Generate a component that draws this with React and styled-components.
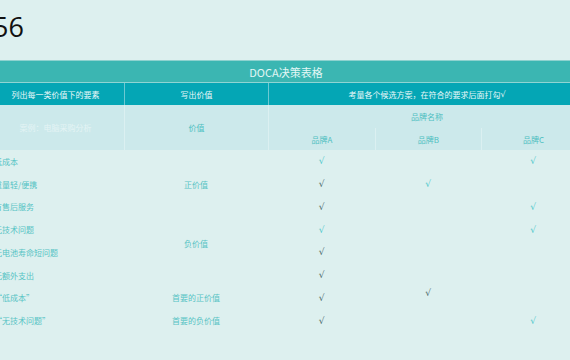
import React from 'react'
import styled, { createGlobalStyle } from 'styled-components'

const GlobalStyle = createGlobalStyle`
  html, body {
    margin: 0;
    padding: 0;
    background: #ddf0ef;
    overflow: hidden;
  }
  body {
    font-family: "Noto Sans CJK SC", "Noto Sans", sans-serif;
  }
`

const rows = [
  { item: '低成本', checks: ['teal', null, 'teal'] },
  { item: '重量轻/便携', checks: ['dark', 'teal', null] },
  { item: '有售后服务', checks: ['dark', null, 'teal'] },
  { item: '无技术问题', checks: ['teal', null, 'teal'] },
  { item: '无电池寿命短问题', checks: ['dark', null, null] },
  { item: '无额外支出', checks: ['dark', null, null] },
  { item: '“低成本”', checks: ['dark', null, null] },
  { item: '“无技术问题”', checks: ['dark', null, 'teal'] },
]

function App() {
  return (
    <Page>
      <GlobalStyle />
      <Heading>56</Heading>
      <Table>
        <TitleCell>DOCA决策表格</TitleCell>

        <HeadCell col="1" row="2">列出每一类价值下的要素</HeadCell>
        <HeadCell col="2" row="2" divided>写出价值</HeadCell>
        <HeadCell col="3 / 6" row="2" divided>
          考量各个候选方案，在符合的要求后面打勾<Tick>√</Tick>
        </HeadCell>

        <SubCell col="1" row="3 / 5" faint>案例：电脑采购分析</SubCell>
        <SubCell col="2" row="3 / 5" divided>价值</SubCell>
        <SubCell col="3 / 6" row="3" divided>品牌名称</SubCell>
        <SubCell col="3" row="4" divided>品牌A</SubCell>
        <SubCell col="4" row="4" divided>品牌B</SubCell>
        <SubCell col="5" row="4" divided>品牌C</SubCell>

        {rows.map((r, i) => (
          <ItemCell key={r.item} row={i + 5}>{r.item}</ItemCell>
        ))}

        <ValueCell row="5 / 8">正价值</ValueCell>
        <ValueCell row="8 / 11" lift={18}>负价值</ValueCell>
        <ValueCell row="11">首要的正价值</ValueCell>
        <ValueCell row="12">首要的负价值</ValueCell>

        {rows.map((r, i) =>
          r.checks.map((c, j) =>
            c ? (
              <CheckCell key={`${i}-${j}`} row={i + 5} col={j + 3} tone={c}>√</CheckCell>
            ) : null
          )
        )}
        <CheckCell row="11" col="4" tone="dark" lift={10}>√</CheckCell>
      </Table>
    </Page>
  )
}

export default App

const Page = styled.div`
  width: 570px;
  height: 360px;
  overflow: hidden;
`

const Heading = styled.div`
  height: 60px;
  box-sizing: border-box;
  padding-top: 12px;
  margin-left: -7px;
  font-family: "Open Sans", sans-serif;
  font-size: 27px;
  line-height: 30px;
  color: #111;
`

const Table = styled.div`
  display: grid;
  margin-left: -13px;
  width: 598px;
  grid-template-columns: 137px 144px 107px 106px 104px;
  grid-template-rows: 23px 22px 23px 22px repeat(8, 22.75px);
  font-size: 8px;
`

const TitleCell = styled.div`
  grid-column: 1 / -1;
  grid-row: 1;
  background: #3bb6b2;
  border-top: 1px solid #8ed2cf;
  border-bottom: 1px solid #8fd4d3;
  box-sizing: border-box;
  display: flex;
  align-items: center;
  justify-content: center;
  color: #e2f6f5;
  font-size: 11px;
`

const HeadCell = styled.div`
  grid-column: ${p => p.col};
  grid-row: ${p => p.row};
  background: #04a6b5;
  border-left: ${p => (p.divided ? '1px solid #6cc9d2' : 'none')};
  display: flex;
  align-items: center;
  justify-content: center;
  color: #eaf8f9;
`

const Tick = styled.span`
  font-family: "DejaVu Sans", sans-serif;
  font-size: 8px;
`

const SubCell = styled.div`
  grid-column: ${p => p.col};
  grid-row: ${p => p.row};
  background: #cce9eb;
  border-left: ${p => (p.divided ? '1px solid #dbf0f1' : 'none')};
  display: flex;
  align-items: center;
  justify-content: center;
  color: ${p => (p.faint ? '#e4f4f5' : '#4fbfc1')};
`

const ItemCell = styled.div`
  grid-column: 1;
  grid-row: ${p => p.row};
  display: flex;
  align-items: center;
  padding-left: 7px;
  color: #56c3c4;
`

const ValueCell = styled.div`
  grid-column: 2;
  grid-row: ${p => p.row};
  display: flex;
  align-items: center;
  justify-content: center;
  padding-bottom: ${p => p.lift || 0}px;
  color: #56c3c4;
`

const CheckCell = styled.div`
  grid-column: ${p => p.col};
  grid-row: ${p => p.row};
  display: flex;
  align-items: center;
  justify-content: center;
  padding-bottom: ${p => p.lift || 0}px;
  color: ${p => (p.tone === 'dark' ? '#4a6a6a' : '#4fc8cb')};
  font-family: "DejaVu Sans", sans-serif;
  font-size: 9px;
`
